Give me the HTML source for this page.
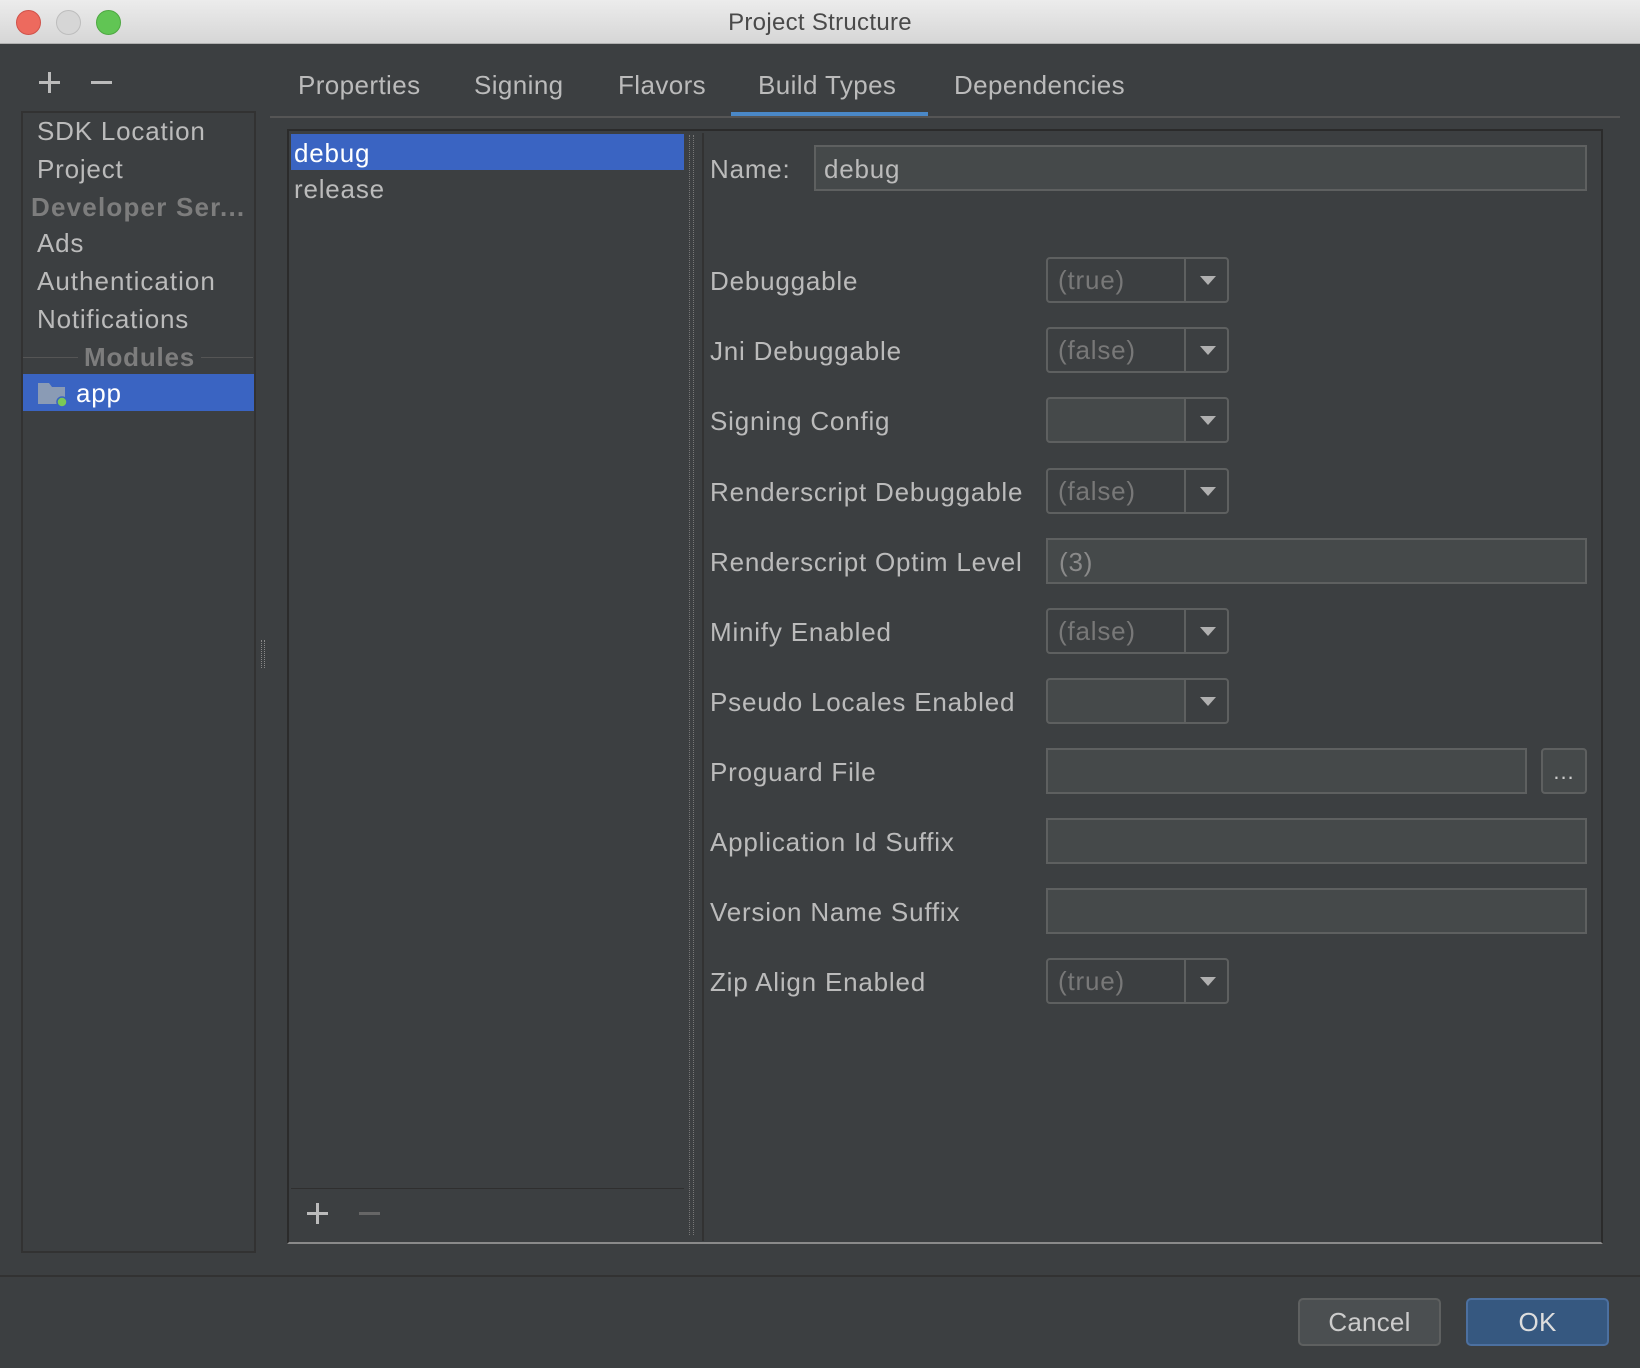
<!DOCTYPE html>
<html><head><meta charset="utf-8"><style>
*{box-sizing:border-box;margin:0;padding:0}
body{width:1640px;height:1368px;background:#3c3f41;font-family:"Liberation Sans",sans-serif;color:#bbbbbb;position:relative;overflow:hidden;font-size:26px;letter-spacing:0.8px}
.a{position:absolute}
.title{left:0;top:0;width:1640px;height:44px;background:linear-gradient(#ececec,#d6d6d6);border-bottom:1px solid #b0b0b0;text-align:center;line-height:46px;color:#4a4a4a;font-size:24px;letter-spacing:0.3px}
.dot{width:25px;height:25px;border-radius:50%;top:10px}
.t{line-height:30px;white-space:nowrap}
.lbl{left:710px}
.combo{left:1046px;width:183px;height:46px;border:2px solid #5e6060;border-radius:4px}
.combo .v{position:absolute;left:10px;top:0;line-height:42px;color:#787878}
.combo .d{position:absolute;left:136px;top:0;width:2px;height:42px;background:#5e6060}
.combo .ar{position:absolute;left:152px;top:17px;width:0;height:0;border-left:8px solid transparent;border-right:8px solid transparent;border-top:9px solid #b0b0b0}
.field{left:1046px;width:541px;height:46px;background:#45494a;border:2px solid #5e6060}
.tab{top:70px;line-height:30px;font-size:26px;letter-spacing:0.4px}
.btn{position:absolute;top:1298px;width:143px;height:48px;border-radius:5px;text-align:center;line-height:44px;font-size:26px;letter-spacing:0.2px}
</style></head><body>
<div class="a title">Project Structure</div>
<div class="a dot" style="left:16px;background:#ed6a5e;border:1px solid #d0524a"></div>
<div class="a dot" style="left:56px;background:#d6d6d6;border:1px solid #bdbdbd"></div>
<div class="a dot" style="left:96px;background:#61c554;border:1px solid #4ea842"></div>

<div class="a" style="left:39px;top:81px;width:21px;height:3px;background:#bbb"></div>
<div class="a" style="left:48px;top:72px;width:3px;height:21px;background:#bbb"></div>
<div class="a" style="left:91px;top:81px;width:21px;height:3px;background:#bbb"></div>

<div class="a" style="left:21px;top:111px;width:235px;height:1142px;border:2px solid #323232"></div>
<div class="a t" style="left:37px;top:116px">SDK Location</div>
<div class="a t" style="left:37px;top:154px">Project</div>
<div class="a t" style="left:31px;top:192px;font-weight:bold;color:#7d7d7d;letter-spacing:1.2px">Developer Ser...</div>
<div class="a t" style="left:37px;top:228px">Ads</div>
<div class="a t" style="left:37px;top:266px;letter-spacing:1px">Authentication</div>
<div class="a t" style="left:37px;top:304px">Notifications</div>
<div class="a" style="left:23px;top:357px;width:230px;height:1px;background:#555"></div>
<div class="a t" style="left:78px;top:342px;padding:0 6px;background:#3c3f41;font-weight:bold;color:#7d7d7d">Modules</div>
<div class="a" style="left:23px;top:374px;width:231px;height:37px;background:#3a64c2"></div>
<svg class="a" style="left:37px;top:380px" width="32" height="28"><path d="M1 3h11l3 4h13v17H1z" fill="#8a9bb5"/><circle cx="25" cy="22" r="5" fill="#7bc857" stroke="#3a64c2" stroke-width="1.5"/></svg>
<div class="a t" style="left:76px;top:378px;color:#fff">app</div>
<div class="a" style="left:261px;top:640px;width:4px;height:28px;border-left:1px dotted #888;border-right:1px dotted #888"></div>

<div class="a tab" style="left:298px">Properties</div>
<div class="a tab" style="left:474px">Signing</div>
<div class="a tab" style="left:618px">Flavors</div>
<div class="a tab" style="left:758px">Build Types</div>
<div class="a tab" style="left:954px">Dependencies</div>
<div class="a" style="left:270px;top:116px;width:1350px;height:2px;background:#555"></div>
<div class="a" style="left:731px;top:112px;width:197px;height:4px;background:#4a88c7"></div>

<div class="a" style="left:287px;top:129px;width:1316px;height:1115px;border:2px solid #2b2b2b;border-bottom:2px solid #8a8a8a"></div>
<div class="a" style="left:291px;top:134px;width:393px;height:36px;background:#3a64c2"></div>
<div class="a t" style="left:294px;top:138px;color:#fff">debug</div>
<div class="a t" style="left:294px;top:174px">release</div>
<div class="a" style="left:291px;top:1188px;width:393px;height:1px;background:#2f2f2f"></div>
<div class="a" style="left:307px;top:1212px;width:21px;height:3px;background:#bbb"></div>
<div class="a" style="left:316px;top:1203px;width:3px;height:21px;background:#bbb"></div>
<div class="a" style="left:359px;top:1212px;width:21px;height:3px;background:#666"></div>
<div class="a" style="left:689px;top:135px;width:5px;height:1100px;border-left:1px dotted #777;border-right:1px dotted #777"></div>
<div class="a" style="left:702px;top:133px;width:2px;height:1108px;background:#323232"></div>

<div class="a t lbl" style="top:154px">Name:</div>
<div class="a field" style="left:814px;top:145px;width:773px"></div>
<div class="a t" style="left:824px;top:154px">debug</div>

<div class="a t lbl" style="top:266px">Debuggable</div>
<div class="a combo" style="top:257px"><span class="v">(true)</span><i class="d"></i><i class="ar"></i></div>
<div class="a t lbl" style="top:336px">Jni Debuggable</div>
<div class="a combo" style="top:327px"><span class="v">(false)</span><i class="d"></i><i class="ar"></i></div>
<div class="a t lbl" style="top:406px">Signing Config</div>
<div class="a combo" style="top:397px;background:linear-gradient(90deg,#45494a 136px,#3c3f41 136px)"><i class="d"></i><i class="ar"></i></div>
<div class="a t lbl" style="top:477px">Renderscript Debuggable</div>
<div class="a combo" style="top:468px"><span class="v">(false)</span><i class="d"></i><i class="ar"></i></div>
<div class="a t lbl" style="top:547px">Renderscript Optim Level</div>
<div class="a field" style="top:538px"></div>
<div class="a t" style="left:1059px;top:547px;color:#8a8a8a">(3)</div>
<div class="a t lbl" style="top:617px">Minify Enabled</div>
<div class="a combo" style="top:608px"><span class="v">(false)</span><i class="d"></i><i class="ar"></i></div>
<div class="a t lbl" style="top:687px">Pseudo Locales Enabled</div>
<div class="a combo" style="top:678px;background:linear-gradient(90deg,#45494a 136px,#3c3f41 136px)"><i class="d"></i><i class="ar"></i></div>
<div class="a t lbl" style="top:757px">Proguard File</div>
<div class="a field" style="top:748px;width:481px"></div>
<div class="a" style="left:1541px;top:748px;width:46px;height:46px;background:#45494a;border:2px solid #5e6060;border-radius:4px;text-align:center;line-height:44px;color:#ccc;font-size:22px;letter-spacing:1px">...</div>
<div class="a t lbl" style="top:827px">Application Id Suffix</div>
<div class="a field" style="top:818px"></div>
<div class="a t lbl" style="top:897px">Version Name Suffix</div>
<div class="a field" style="top:888px"></div>
<div class="a t lbl" style="top:967px">Zip Align Enabled</div>
<div class="a combo" style="top:958px"><span class="v">(true)</span><i class="d"></i><i class="ar"></i></div>

<div class="a" style="left:0;top:1275px;width:1640px;height:2px;background:#323232"></div>
<div class="btn" style="left:1298px;background:#4b4f51;border:2px solid #5e6060;color:#ccc">Cancel</div>
<div class="btn" style="left:1466px;background:#365880;border:2px solid #4c70a0;color:#ddd">OK</div>
</body></html>
